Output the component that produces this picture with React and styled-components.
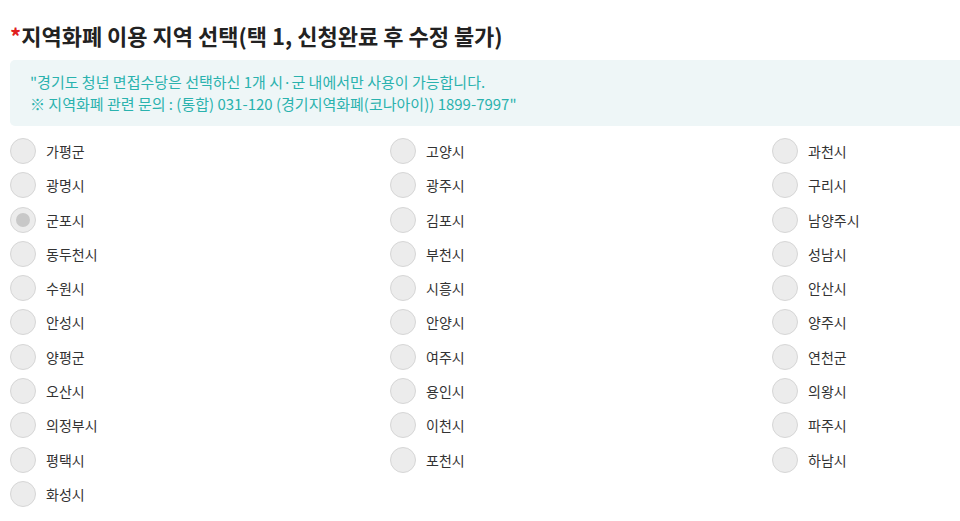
import React from 'react'
import styled, { createGlobalStyle } from 'styled-components'

const regions = [
  '가평군', '고양시', '과천시',
  '광명시', '광주시', '구리시',
  '군포시', '김포시', '남양주시',
  '동두천시', '부천시', '성남시',
  '수원시', '시흥시', '안산시',
  '안성시', '안양시', '양주시',
  '양평군', '여주시', '연천군',
  '오산시', '용인시', '의왕시',
  '의정부시', '이천시', '파주시',
  '평택시', '포천시', '하남시',
  '화성시',
]

const GlobalStyle = createGlobalStyle`
  html, body {
    margin: 0;
    padding: 0;
    background: #fff;
    overflow: hidden;
  }
  body {
    font-family: "Noto Sans CJK KR", "Noto Sans", sans-serif;
    color: #333;
  }
`

const App = () => {
  return (
    <Page>
      <GlobalStyle />
      <Title><Star>*</Star>지역화폐 이용 지역 선택(택 1, 신청완료 후 수정 불가)</Title>
      <Notice>
        "경기도 청년 면접수당은 선택하신 1개 시·군 내에서만 사용이 가능합니다.<br />
        ※ 지역화폐 관련 문의 : (통합) 031-120 (경기지역화폐(코나아이)) 1899-7997"
      </Notice>
      <Grid>
        {regions.map((name) => (
          <Option key={name}>
            <Radio $checked={name === '군포시'} />
            <Label>{name}</Label>
          </Option>
        ))}
      </Grid>
    </Page>
  )
}

const Page = styled.div`
  width: 960px;
  padding: 19px 0 0 10px;
  box-sizing: border-box;
`

const Title = styled.h2`
  margin: 0;
  font-size: 22px;
  font-weight: 700;
  line-height: 32px;
  color: #222;
`

const Star = styled.span`
  color: #e02020;
`

const Notice = styled.div`
  margin-top: 9px;
  margin-right: -200px;
  padding: 11px 20px 11px;
  background: #eef6f7;
  border-radius: 5px;
  color: #2ab2ae;
  font-size: 15px;
  line-height: 22px;
`

const Grid = styled.div`
  display: grid;
  grid-template-columns: 380px 382px 1fr;
  row-gap: 8.3px;
  margin-top: 12px;
`

const Option = styled.label`
  display: flex;
  align-items: center;
  gap: 10px;
  height: 26px;
`

const Radio = styled.span`
  display: flex;
  align-items: center;
  justify-content: center;
  width: 26px;
  height: 26px;
  box-sizing: border-box;
  border-radius: 50%;
  background: #ececec;
  border: 1px solid #d6d6d6;
  flex-shrink: 0;

  &::after {
    content: '';
    width: 14px;
    height: 14px;
    border-radius: 50%;
    background: #c8c8c8;
    display: ${(p) => (p.$checked ? 'block' : 'none')};
  }
`

const Label = styled.span`
  font-size: 14px;
  color: #333;
`

export default App
